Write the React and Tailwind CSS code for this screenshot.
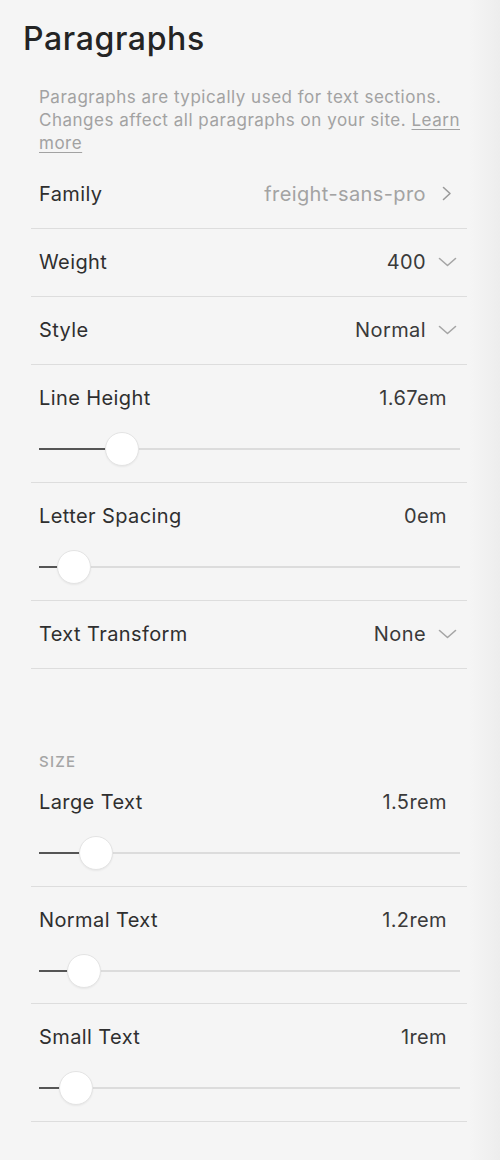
import React from "react";

const font = { fontFamily: "Inter, 'Noto Sans', sans-serif" };

function ChevronRight() {
  return (
    <svg width="12" height="15" viewBox="0 0 12 15" fill="none" className="ml-[15px] mr-[14px]">
      <path d="M2.5 1.5 L9 7.5 L2.5 13.5" stroke="#9a9a9a" strokeWidth="1.6" strokeLinecap="round" strokeLinejoin="round" />
    </svg>
  );
}

function ChevronDown() {
  return (
    <svg width="19" height="10" viewBox="0 0 19 10" fill="none" className="ml-[12px] mr-[10px]">
      <path d="M1.5 1.5 L9.5 8.5 L17.5 1.5" stroke="#a5a5a5" strokeWidth="1.6" strokeLinecap="round" strokeLinejoin="round" />
    </svg>
  );
}

function SelectRow({ label, value, muted, icon }) {
  return (
    <div className="flex h-[68px] items-center border-b border-[#dddddd] pb-[2px] pl-2 tracking-[0.025em]">
      <span className="flex-1 text-[20px] leading-6 text-[#2f2f2f]">{label}</span>
      <span className={"text-[20px] leading-6 " + (muted ? "text-[#a3a3a3]" : "text-[#3a3a3a]")}>{value}</span>
      {icon === "right" ? <ChevronRight /> : <ChevronDown />}
    </div>
  );
}

function SliderRow({ label, value, pos, h = "h-[118px]" }) {
  return (
    <div className={"flex flex-col border-b border-[#dddddd] pl-2 pr-[20px] pt-[21px] " + h}>
      <div className="flex items-center leading-6 tracking-[0.025em]">
        <span className="flex-1 text-[20px] text-[#2f2f2f]">{label}</span>
        <span className="text-[20px] text-[#3a3a3a]">{value}</span>
      </div>
      <div className="relative mt-[22px] mr-[-13px] h-[34px]">
        <div className="absolute left-0 right-0 top-[16px] h-[2px] bg-[#dcdcdc]" />
        <div className="absolute left-0 top-[16px] h-[2px] bg-[#555555]" style={{ width: pos - 39 }} />
        <div
          className="absolute top-0 h-[34px] w-[34px] rounded-full border border-[#e4e4e4] bg-white shadow-[0_1px_2px_rgba(0,0,0,0.06)]"
          style={{ left: pos - 39 - 17 }}
        />
      </div>
    </div>
  );
}

export default function App() {
  return (
    <div className="flex h-[1160px] w-[500px] bg-[#f5f5f5]" style={font}>
      <div className="w-[470px] shrink-0">
        <h1 className="pl-[23px] pt-[19px] text-[32px] font-medium leading-[40px] tracking-[0.02em] text-[#242424]">Paragraphs</h1>
        <div className="ml-[31px] w-[436px]">
          <p className="mt-[27px] mb-[6px] pl-2 text-[17px] leading-[23px] tracking-[0.03em] text-[#a2a2a2]">
            Paragraphs are typically used for text sections. Changes affect all paragraphs on your site.{" "}
            <span className="underline decoration-1 underline-offset-[3px]">Learn more</span>
          </p>
          <SelectRow label="Family" value="freight-sans-pro" muted icon="right" />
          <SelectRow label="Weight" value="400" />
          <SelectRow label="Style" value="Normal" />
          <SliderRow label="Line Height" value="1.67em" pos={122} />
          <SliderRow label="Letter Spacing" value="0em" pos={74} />
          <SelectRow label="Text Transform" value="None" />
          <div className="mt-[84px] pl-2 text-[15px] font-medium uppercase leading-[18px] tracking-[0.08em] text-[#a5a5a5]">Size</div>
          <div className="-mt-[2px]">
            <SliderRow label="Large Text" value="1.5rem" pos={96} h="h-[118px]" />
            <SliderRow label="Normal Text" value="1.2rem" pos={84} h="h-[117px]" />
            <SliderRow label="Small Text" value="1rem" pos={76} h="h-[118px]" />
          </div>
        </div>
      </div>
      <div className="w-[30px] bg-gradient-to-r from-[#f5f5f5] to-[#ededed]" />
    </div>
  );
}
